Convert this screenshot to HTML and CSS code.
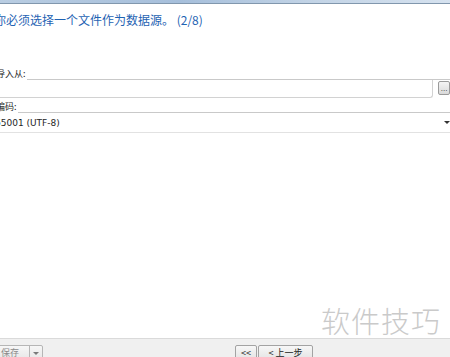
FILE: index.html
```html
<!DOCTYPE html>
<html lang="zh-CN">
<head>
    <meta charset="UTF-8">
    <meta name="viewport" content="width=device-width, initial-scale=1.0">
    <title>导入向导</title>
    <link rel="stylesheet" href="styles.css">
</head>
<body>
    <div id="window">
        <div id="top-bar"></div>

        <div id="page">
            <h1 id="instruction">你必须选择一个文件作为数据源。 (2/8)</h1>

            <div class="field-label">
                <span>导入从:</span>
                <div class="field-line"></div>
            </div>
            <div class="file-row">
                <div class="file-input"></div>
                <button class="browse-btn">...</button>
            </div>

            <div class="field-label close">
                <span>编码:</span>
                <div class="field-line"></div>
            </div>
            <div class="combo">
                <span>65001 (UTF-8)</span>
                <span class="combo-arrow"></span>
            </div>
        </div>

        <div id="footer">
            <div class="split-btn">
                <span class="split-main">保存</span>
                <span class="split-drop"><span class="combo-arrow"></span></span>
            </div>
            <div class="nav-buttons">
                <button class="nav-btn">&lt;&lt;</button>
                <button class="nav-btn wide">&lt; 上一步</button>
            </div>
        </div>

        <!-- watermark sits over the page -->
        <div id="watermark">软件技巧</div>
    </div>
</body>
</html>
```

FILE: styles.css
```css
body {
    margin: 0;
    background-color: #ffffff;
    font-family: "Noto Sans CJK SC", "DejaVu Sans", sans-serif;
    color: #1e1e1e;
    overflow: hidden;
}

#window {
    position: relative;
    width: 450px;
    height: 357px;
    display: flex;
    flex-direction: column;
    overflow: hidden;
}

/* Thin blue strip at the very top */
#top-bar {
    height: 3px;
    flex-shrink: 0;
    background: linear-gradient(to right, #b9cde2, #a6bfdb 40%, #c3d4e6 70%, #d6e2ef);
    border-bottom: 1px solid #8197ad;
}

#page {
    flex: 1;
    margin-left: -6px;
}

#instruction {
    margin: 8px 0 0 0;
    font-size: 12px;
    line-height: 16px;
    font-weight: normal;
    color: #1f63b3;
}

/* Label with its line running to the right */
.field-label {
    display: flex;
    align-items: flex-end;
    font-size: 9px;
    line-height: 11px;
    margin-top: 40px;
    padding-left: 2px;
}

.field-label.close {
    margin-top: 3px;
}

.field-label span {
    padding-bottom: 1px;
}

.field-line {
    flex: 1;
    border-bottom: 1px solid #c9c9c9;
    margin-left: 1px;
}

.file-row {
    display: flex;
    align-items: flex-start;
}

.file-input {
    width: 442px;
    height: 17px;
    border: 1px solid #d2d2d2;
    border-top: none;
    border-radius: 0 0 3px 0;
}

.browse-btn {
    margin: 1px 0 0 5px;
    width: 12px;
    height: 14px;
    padding: 0;
    border: 1px solid #9a9a9a;
    border-radius: 2px;
    background: linear-gradient(#f4f4f4, #d9d9d9);
    font-size: 7px;
    line-height: 14px;
    color: #333;
    font-family: "DejaVu Sans", sans-serif;
}

.combo {
    display: flex;
    justify-content: space-between;
    align-items: center;
    height: 19px;
    border-bottom: 1px solid #e2e2e2;
    font-size: 9px;
    font-family: "DejaVu Sans", sans-serif;
    padding-left: 1px;
    width: 455px;
}

.combo-arrow {
    display: inline-block;
    width: 0;
    height: 0;
    border-left: 3px solid transparent;
    border-right: 3px solid transparent;
    border-top: 3px solid #333;
}

/* Bottom button bar */
#footer {
    height: 12px;
    flex-shrink: 0;
    border-top: 1px solid #dadada;
    background-color: #f0f0f0;
    padding-top: 6px;
    display: flex;
    align-items: flex-start;
}

.split-btn {
    display: flex;
    flex-shrink: 0;
    margin-left: -12px;
    height: 14px;
    border: 1px solid #b6b6b6;
    border-radius: 2px;
    background: linear-gradient(#f7f7f7, #e6e6e6);
    font-size: 9px;
    line-height: 14px;
    color: #8a8a8a;
}

.split-main {
    width: 28px;
    padding-left: 12px;
    border-right: 1px solid #b6b6b6;
}

.split-drop {
    width: 12px;
    display: flex;
    align-items: center;
    justify-content: center;
}

.split-drop .combo-arrow {
    border-top-color: #7a7a7a;
}

.nav-buttons {
    display: flex;
    gap: 1px;
    margin-left: 192px;
}

.nav-btn {
    height: 16px;
    width: 22px;
    padding: 0;
    border: 1px solid #a3a3a3;
    border-radius: 2px;
    background: linear-gradient(#f7f7f7, #e3e3e3);
    font-family: "Noto Sans CJK SC", "DejaVu Sans", sans-serif;
    font-size: 9px;
    line-height: 14px;
    color: #222;
}

.nav-btn.wide {
    width: 55px;
}

#watermark {
    position: absolute;
    left: 321px;
    top: 302px;
    font-size: 29px;
    line-height: 36px;
    letter-spacing: 1px;
    color: #cacaca;
    font-weight: 300;
}
```
